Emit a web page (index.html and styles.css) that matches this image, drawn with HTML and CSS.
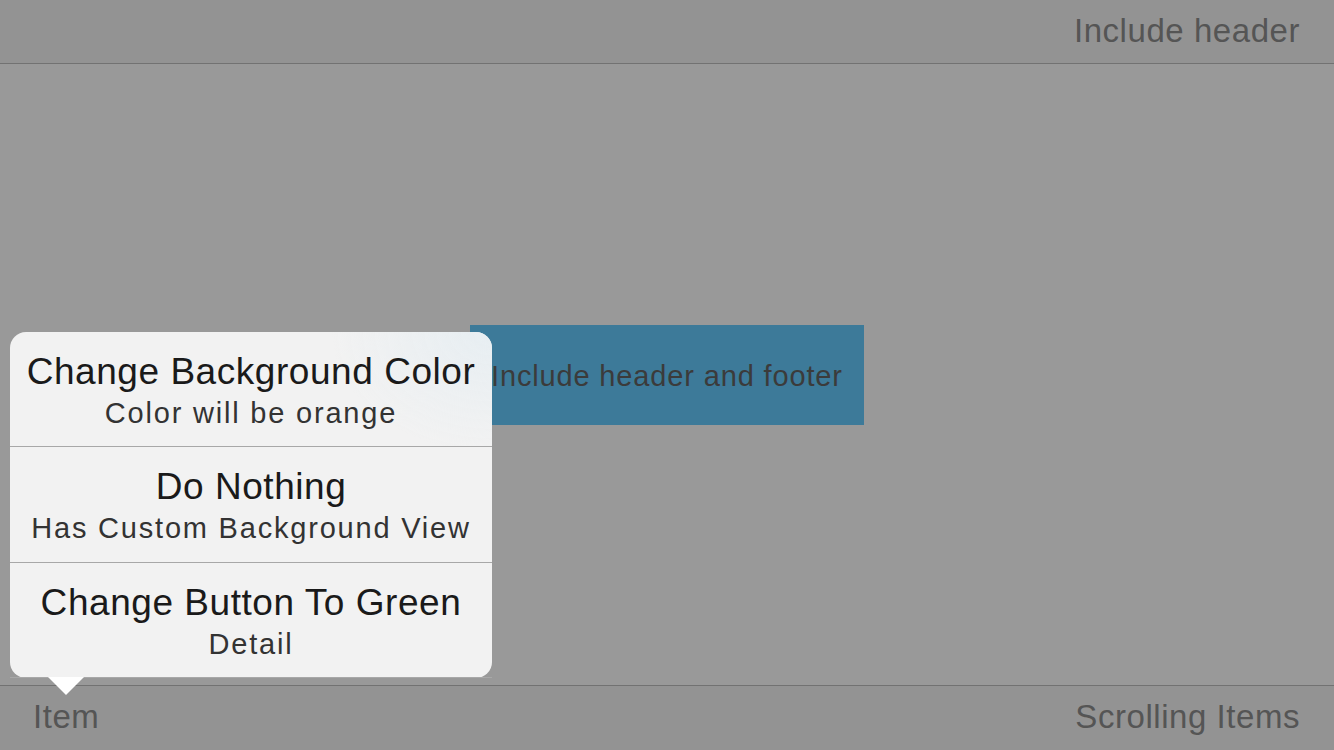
FILE: index.html
```html
<!DOCTYPE html>
<html>
<head>
<meta charset="utf-8">
<link rel="stylesheet" href="styles.css">
</head>
<body>
<div class="screen">
  <header class="topbar"><span class="bar-title">Include header</span></header>
  <main class="content">
    <div class="blue-box"><span class="blue-text">Include header and footer</span></div>
  </main>
  <footer class="bottombar">
    <span class="bar-item">Item</span>
    <span class="bar-title">Scrolling Items</span>
  </footer>
  <div class="popover">
    <div class="pop-row pop-row-first">
      <div class="pop-title">Change Background Color</div>
      <div class="pop-sub">Color will be orange</div>
    </div>
    <div class="pop-row">
      <div class="pop-title">Do Nothing</div>
      <div class="pop-sub">Has Custom Background View</div>
    </div>
    <div class="pop-row">
      <div class="pop-title">Change Button To Green</div>
      <div class="pop-sub">Detail</div>
    </div>
    <div class="pop-arrow"></div>
  </div>
</div>
</body>
</html>
```
FILE: styles.css
```css
html, body {
  margin: 0;
  padding: 0;
}
body {
  font-family: "Liberation Sans", Arial, sans-serif;
  background: #999999;
}
.screen {
  position: relative;
  width: 1334px;
  height: 750px;
  display: flex;
  flex-direction: column;
  overflow: hidden;
  background: #999999;
}
.topbar {
  height: 64px;
  box-sizing: border-box;
  border-bottom: 1px solid #727272;
  background: #939393;
  display: flex;
  align-items: center;
  justify-content: flex-end;
  padding: 0 34px 2px 0;
}
.bar-title, .bar-item {
  font-size: 33px;
  letter-spacing: 0.55px;
  color: #555555;
}
.content {
  flex: 1;
  position: relative;
}
.blue-box {
  position: absolute;
  left: 470px;
  top: 261px;
  width: 394px;
  height: 100px;
  background: #3d7a99;
  display: flex;
  align-items: center;
  padding-left: 21px;
  box-sizing: border-box;
}
.blue-text {
  font-size: 29px;
  letter-spacing: 0.85px;
  color: #3b3b3b;
  padding-top: 2px;
  white-space: nowrap;
}
.bottombar {
  height: 65px;
  box-sizing: border-box;
  border-top: 1px solid #727272;
  background: #939393;
  display: flex;
  align-items: center;
  justify-content: space-between;
  padding: 0 34px 2px 33px;
}
.popover {
  position: absolute;
  left: 10px;
  top: 332px;
  width: 482px;
  height: 346px;
  border-radius: 16px;
  background: #f2f2f2;
  display: flex;
  flex-direction: column;
}
.pop-row {
  flex: 1;
  display: flex;
  flex-direction: column;
  align-items: center;
  justify-content: center;
  border-bottom: 1px solid #a8a8a8;
  padding-top: 6px;
}
.pop-row-first {
  border-radius: 16px 16px 0 0;
  background: radial-gradient(ellipse 160px 120px at 100% 0%, #e7eef2 0%, rgba(242,242,242,0) 100%);
}
.pop-row:last-of-type {
  border-bottom: none;
}
.pop-title {
  font-size: 37px;
  letter-spacing: 0.55px;
  color: #1a1a1a;
  line-height: 42px;
  white-space: nowrap;
}
.pop-sub {
  font-size: 29px;
  letter-spacing: 1.8px;
  color: #333333;
  line-height: 40px;
  white-space: nowrap;
}
.pop-arrow {
  position: absolute;
  left: 38px;
  top: 345px;
  width: 0;
  height: 0;
  border-left: 18px solid transparent;
  border-right: 18px solid transparent;
  border-top: 18px solid #ffffff;
}
```
